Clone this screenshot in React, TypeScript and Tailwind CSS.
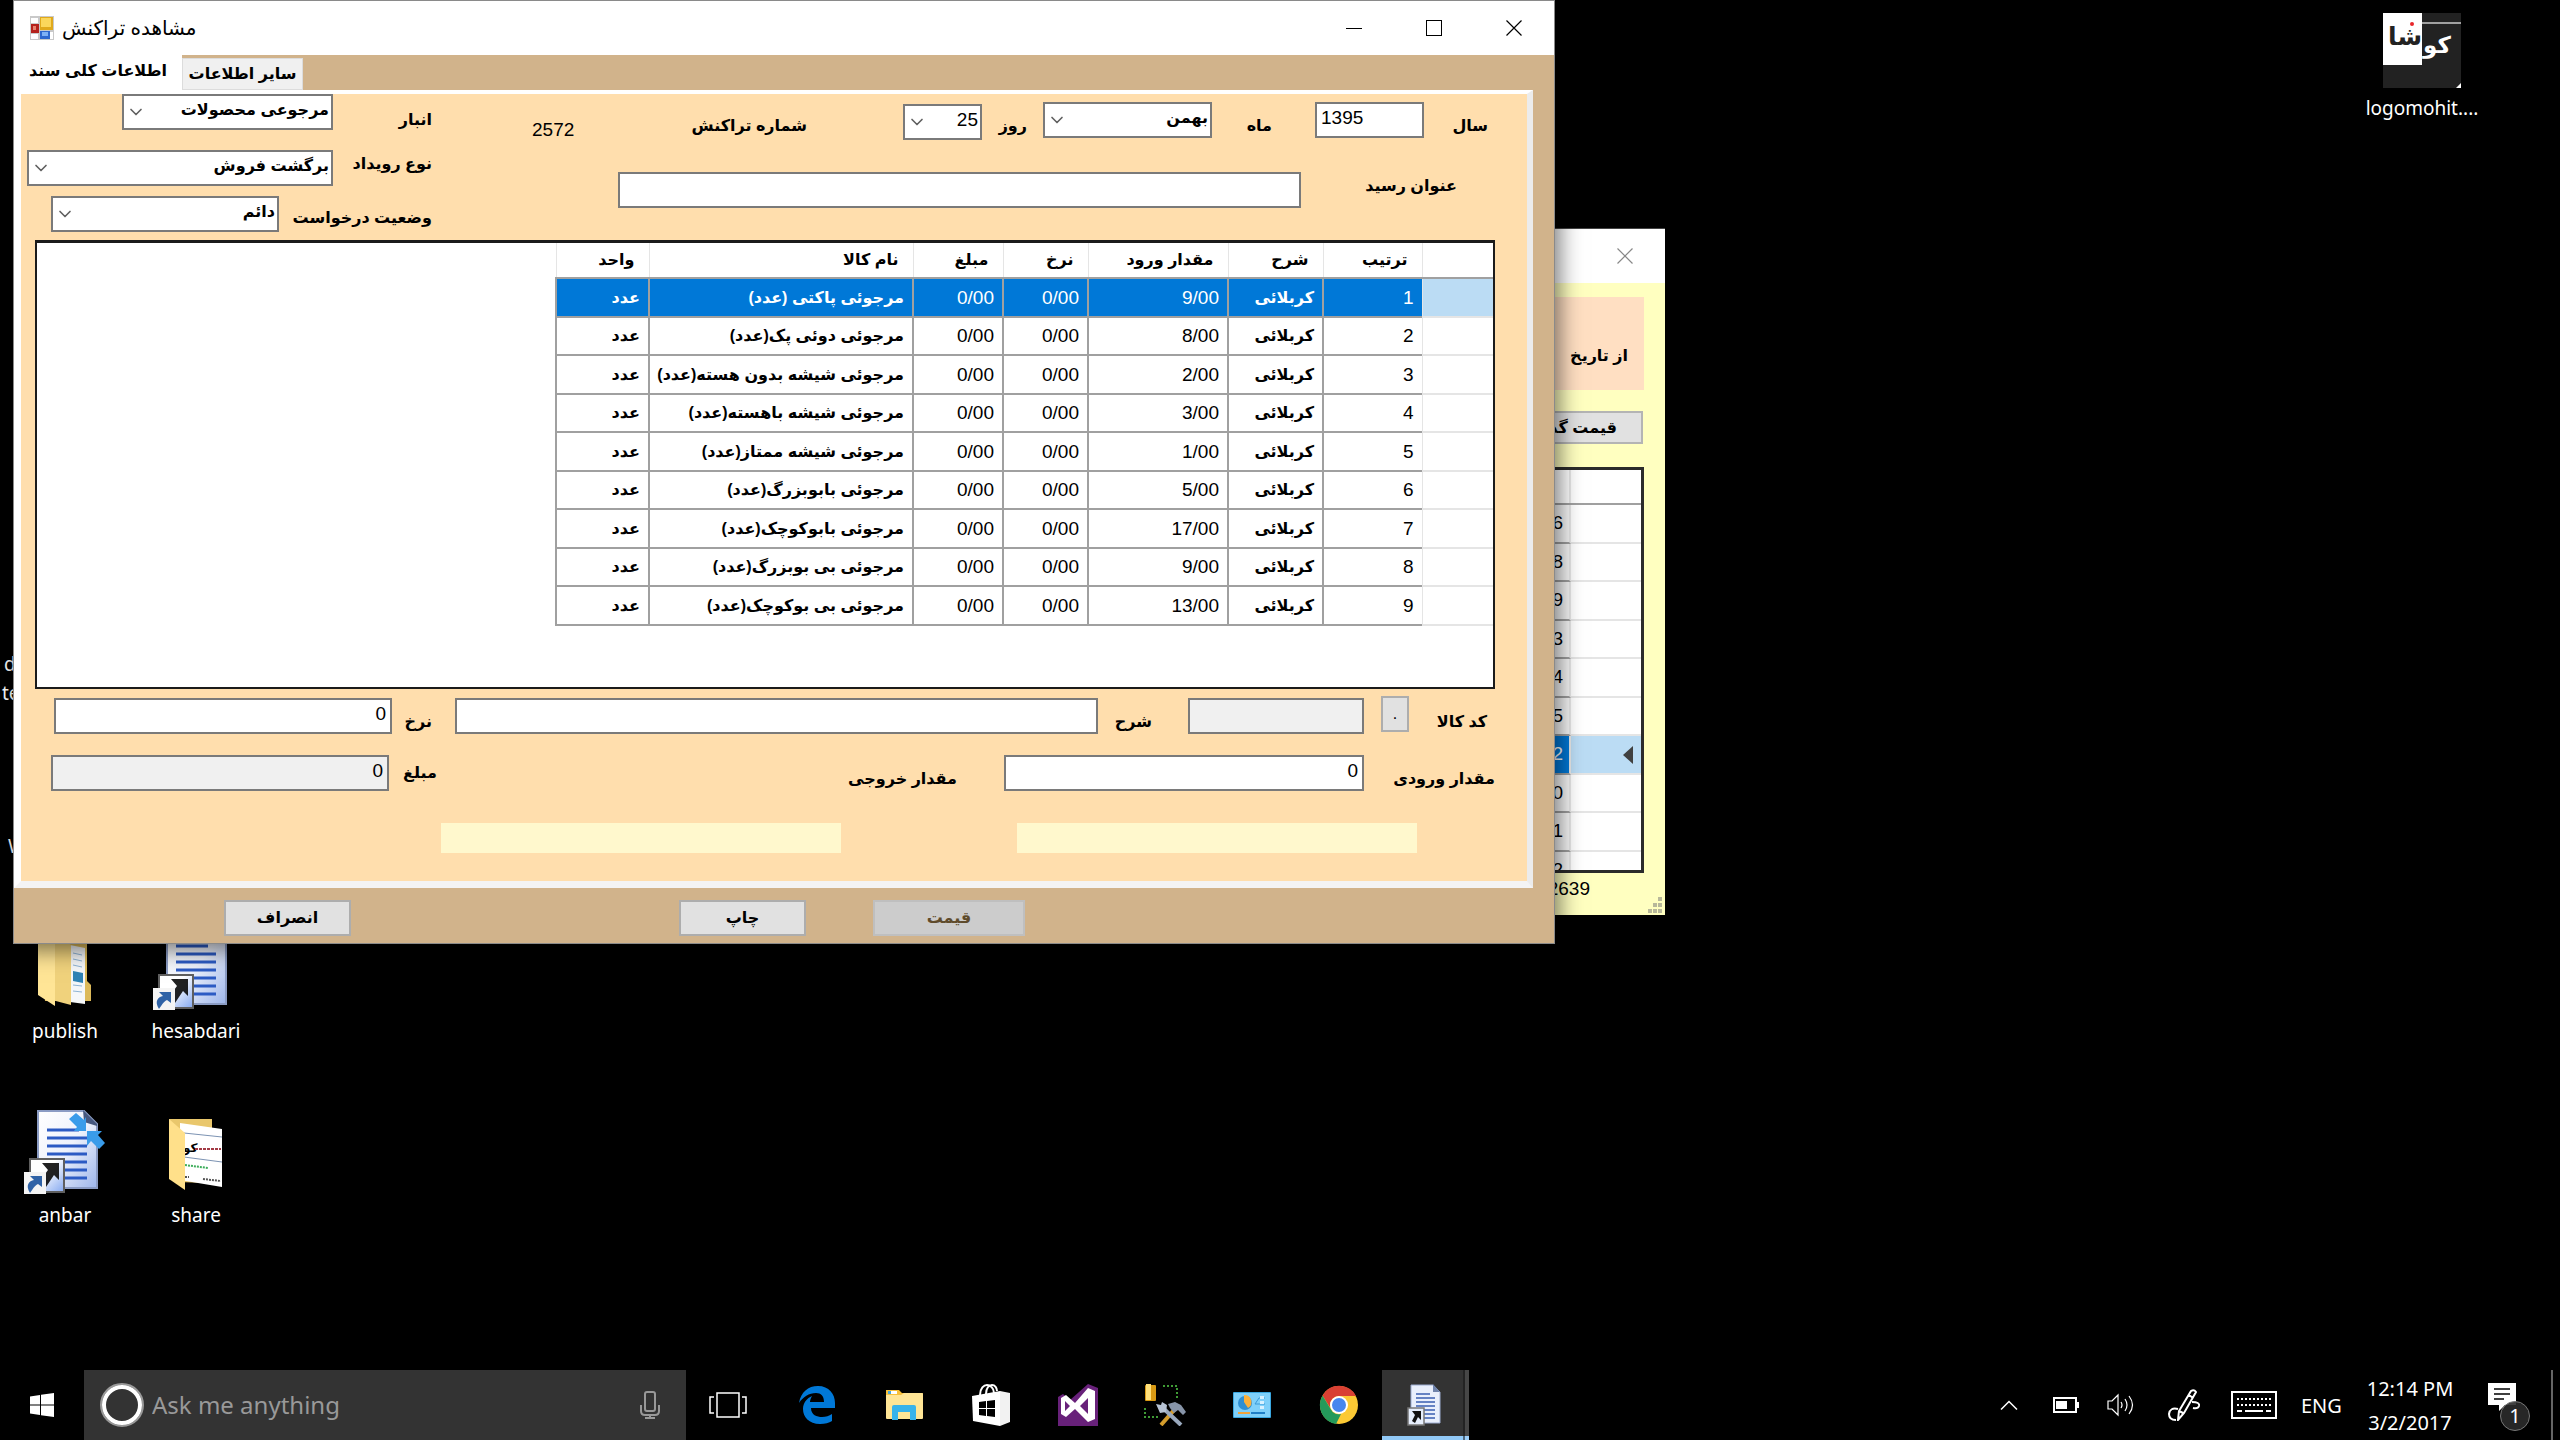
import type { ReactNode } from "react";
import clsx from "clsx";
import { ChevronDown } from "lucide-react";

type Row = {
  order: number;
  qty: string;
  name: string;
};

const ROWS: Row[] = [
  { order: 1, qty: "9/00", name: "مرجوئی پاکتی (عدد)" },
  { order: 2, qty: "8/00", name: "مرجوئی دوئی پک(عدد)" },
  { order: 3, qty: "2/00", name: "مرجوئی شیشه بدون هسته(عدد)" },
  { order: 4, qty: "3/00", name: "مرجوئی شیشه باهسته(عدد)" },
  { order: 5, qty: "1/00", name: "مرجوئی شیشه ممتاز(عدد)" },
  { order: 6, qty: "5/00", name: "مرجوئی بابوبزرگ(عدد)" },
  { order: 7, qty: "17/00", name: "مرجوئی بابوکوچک(عدد)" },
  { order: 8, qty: "9/00", name: "مرجوئی بی بوبزرگ(عدد)" },
  { order: 9, qty: "13/00", name: "مرجوئی بی بوکوچک(عدد)" }
];

const BACK_ROWS = ["6", "8", "9", "3", "4", "5", "2", "0", "1", "2"];
const BACK_SELECTED = 6;

/* ---------- form controls ---------- */

const Label = ({
  htmlFor,
  className,
  children
}: {
  htmlFor?: string;
  className?: string;
  children: ReactNode;
}) => (
  <label
    htmlFor={htmlFor}
    dir="rtl"
    className={clsx("block shrink-0 text-base leading-7 font-bold whitespace-nowrap", className)}
  >
    {children}
  </label>
);

const Combo = ({
  id,
  value,
  numeric = false,
  className
}: {
  id: string;
  value: string;
  numeric?: boolean;
  className?: string;
}) => (
  <div className={clsx("relative h-9 shrink-0", className)}>
    <select
      id={id}
      dir="rtl"
      defaultValue={value}
      className={clsx(
        "h-9 w-full appearance-none border-2 border-[#7a7a7a] bg-white pr-0.5 pb-1 pl-7 outline-none",
        numeric ? "text-[19px]" : "text-base font-bold"
      )}
    >
      <option>{value}</option>
    </select>
    <ChevronDown
      className="pointer-events-none absolute top-2 left-1 h-5 w-5 text-[#606060]"
      strokeWidth={2}
    />
  </div>
);

const TextBox = ({
  id,
  value = "",
  disabled = false,
  className
}: {
  id: string;
  value?: string;
  disabled?: boolean;
  className?: string;
}) => (
  <input
    id={id}
    type="text"
    defaultValue={value}
    disabled={disabled}
    className={clsx(
      "h-9 shrink-0 border-2 border-[#7a7a7a] px-1 pb-1 text-[19px] outline-none",
      disabled ? "bg-[#f0f0f0]" : "bg-white",
      className
    )}
  />
);

const PushButton = ({
  disabled = false,
  className,
  children
}: {
  disabled?: boolean;
  className?: string;
  children: ReactNode;
}) => (
  <button
    type="button"
    disabled={disabled}
    className={clsx(
      "h-9 shrink-0 border-2 text-base font-bold",
      disabled
        ? "border-[#bfbfbf] bg-[#cccccc] text-[#5f4b2b]"
        : "border-[#adadad] bg-[#e1e1e1] text-black",
      className
    )}
  >
    {children}
  </button>
);

/* ---------- window icons ---------- */

const FormIcon = () => (
  <svg viewBox="0 0 24 24" className="h-6 w-6">
    <rect width="24" height="24" fill="#c9c9c9" />
    <rect x="1" y="2" width="7" height="5" fill="#fff" />
    <rect x="1" y="18" width="7" height="5" fill="#fff" />
    <rect x="20" y="16" width="3" height="7" fill="#fff" />
    <rect x="10" y="1" width="13" height="13" fill="#e0a91c" />
    <rect x="11" y="2" width="10" height="9" fill="#fbd75c" />
    <rect x="1" y="8" width="8" height="9" fill="#b5221c" />
    <rect x="3" y="10" width="3" height="4" fill="#e9826f" />
    <rect x="10" y="15" width="10" height="8" fill="#2f67cf" />
    <rect x="12" y="16" width="6" height="4" fill="#7fb0f5" />
  </svg>
);

const CloseGlyph = () => (
  <svg viewBox="0 0 16 16" className="h-4 w-4" stroke="currentColor" strokeWidth="1.2">
    <path d="M.5.5l15 15M15.5.5l-15 15" />
  </svg>
);

/* ---------- desktop icons ---------- */

const DocShortcut = ({ arrows = false }: { arrows?: boolean }) => (
  <svg viewBox="0 0 84 86" className="h-[86px] w-[84px]">
    <defs>
      <linearGradient id="docPage" x1="0" y1="0" x2="1" y2="1">
        <stop offset="0" stopColor="#ffffff" />
        <stop offset=".5" stopColor="#eef2fc" />
        <stop offset="1" stopColor="#9db5ea" />
      </linearGradient>
      <linearGradient id="docBadge" x1="0" y1="0" x2="1" y2="1">
        <stop offset=".4" stopColor="#ffffff" />
        <stop offset="1" stopColor="#84a8f0" />
      </linearGradient>
    </defs>
    <path d="M15 2h46l13 13v64H15z" fill="url(#docPage)" stroke="#8b9cc4" strokeWidth="2" />
    <path d="M60 1l14 14v2l-13-4z" fill="#46587f" />
    <path
      d="M24 21h32M24 29h40M24 37h40M24 45h40M24 53h40M24 61h40M24 69h40"
      stroke="#2c5bc4"
      strokeWidth="3"
    />
    <rect x="7" y="50" width="34" height="33" fill="url(#docBadge)" stroke="#5f5f5f" strokeWidth="2" />
    <path d="M19 54h17v17l-5-5-8 12-6-6 8-11z" fill="#0a0a0a" opacity=".9" />
    <rect x="1" y="63" width="22" height="22" fill="#f4f4f4" />
    <path d="M7 84c-5-8-1-12 4-13l-4-4h12v11l-4-3c-4 2-5 5-8 9z" fill="#2f62a6" />
    {arrows && (
      <path
        d="M46 10l7-6 8 7 2-3v14H51l3-4zM64 22h15l-4 4 7 8-6 6-8-8-4 5z"
        fill="#3a9cea"
      />
    )}
  </svg>
);

const PublishFolder = () => (
  <svg viewBox="0 0 60 88" className="h-[88px] w-[60px]">
    <path d="M4 2h48v56l4 4v16H10z" fill="#dcb959" />
    <path d="M35 22l15 3v56l-15-2z" fill="#f5f7f9" />
    <path d="M38 30l9 2M38 36l9 2M38 42l9 2M38 62l9 1M38 68l9 1" stroke="#8fb4d4" strokeWidth="1" />
    <path d="M38 48l10 2v10l-10-2z" fill="#2f83b5" />
    <path d="M17 8l19 14v60l-19-5z" fill="#f0d27c" />
    <path d="M3 4l17 14v65L3 72z" fill="#ffe596" />
  </svg>
);

const ShareFolder = () => (
  <svg viewBox="0 0 56 77" className="h-[77px] w-14">
    <path d="M1 1h43v64L8 64z" fill="#e9c76c" />
    <path d="M12 5l42 6v58l-42-7z" fill="#ffffff" />
    <path d="M16 15l38 4M16 39l38 5" stroke="#7c93b3" strokeWidth="1" />
    <text x="15" y="34" fontSize="12" fontWeight="bold" className="font-['DejaVu_Sans',sans-serif]">
      کو
    </text>
    <path d="M27 31h26" stroke="#a33a45" strokeWidth="2" strokeDasharray="3 1" />
    <path d="M17 47l23 3" stroke="#3fae5c" strokeWidth="2" strokeDasharray="2 1" />
    <path d="M17 59h4M35 61l18 2" stroke="#555" strokeWidth="2" strokeDasharray="2 1" />
    <path d="M1 1l16 14v57L1 61z" fill="#ffe08a" />
  </svg>
);

const LogoImage = () => (
  <svg viewBox="0 0 78 75" className="h-[75px] w-[78px]">
    <rect width="78" height="75" fill="#222222" />
    <rect width="39" height="52" fill="#ffffff" />
    <rect x="39" y="9" width="39" height="2" fill="#a0a0a0" />
    <path d="M78 70v5h-5z" fill="#fff" />
    <g fontWeight="bold" className="font-['DejaVu_Sans',sans-serif]">
      <text x="5" y="32" fontSize="25" fill="#222222">
        شا
      </text>
      <text x="40" y="40" fontSize="23" fill="#ffffff">
        کو
      </text>
    </g>
    <circle cx="29" cy="11" r="2" fill="#e8262b" />
  </svg>
);

const DesktopIcon = ({
  label,
  className,
  children
}: {
  label: string;
  className: string;
  children?: ReactNode;
}) => (
  <a
    href="#"
    className={clsx(
      "absolute flex w-[130px] flex-col items-center gap-1.5 text-[19px] leading-7 text-white",
      className
    )}
  >
    <span className="flex h-[92px] items-end">{children}</span>
    {label}
  </a>
);

/* ---------- transaction window ---------- */

const ItemsTable = () => (
  <div
    dir="rtl"
    className="mr-8 ml-[14px] h-[449px] border-2 border-t-[3px] border-[#1b1b1b] bg-white"
  >
    <table className="w-[937px] table-fixed border-collapse text-right text-[19px] leading-6">
      <colgroup>
        <col className="w-[71px]" />
        <col className="w-[99px]" />
        <col className="w-[95px]" />
        <col className="w-[140px]" />
        <col className="w-[85px]" />
        <col className="w-[90px]" />
        <col className="w-[264px]" />
        <col className="w-[93px]" />
      </colgroup>
      <thead>
        <tr className="h-[35px] border-b-2 border-[#a0a0a0] text-base">
          <th />
          {["ترتیب", "شرح", "مقدار ورود", "نرخ", "مبلغ", "نام کالا", "واحد"].map((title) => (
            <th key={title} className="border-x border-[#e5e5e5] pr-[14px] whitespace-nowrap">
              {title}
            </th>
          ))}
        </tr>
      </thead>
      <tbody>
        {ROWS.map((row, index) => {
          const cell = clsx(
            "border-l-2 border-b-2 border-[#a0a0a0] pr-2 whitespace-nowrap",
            index === 0 && "bg-[#0078d7] text-white"
          );
          return (
            <tr key={row.order} className="odd:h-[39px] even:h-[38px]">
              <td
                className={clsx(
                  "border-b-2 border-l border-[#e5e5e5]",
                  index === 0 && "bg-[#bbdcf4]"
                )}
              />
              <td className={cell}>{row.order}</td>
              <td className={clsx(cell, "text-base font-bold")}>کربلائی</td>
              <td className={cell}>{row.qty}</td>
              <td className={cell}>0/00</td>
              <td className={cell}>0/00</td>
              <td className={clsx(cell, "text-base font-bold")}>{row.name}</td>
              <td className={clsx(cell, "text-base font-bold")}>عدد</td>
            </tr>
          );
        })}
      </tbody>
    </table>
  </div>
);

const TransactionWindow = () => (
  <section className="absolute top-0 left-[13px] flex w-[1542px] flex-col border border-[#8a8a8a] bg-[#d1b38b] font-['Liberation_Sans','DejaVu_Sans',sans-serif] text-black shadow-[4px_6px_22px_rgba(0,0,0,0.55)]">
    <header className="flex h-[54px] items-center bg-white pl-4">
      <FormIcon />
      <h1 className="ml-2 font-['Noto_Sans','DejaVu_Sans',sans-serif] text-xl">مشاهده تراکنش</h1>
      <div className="ml-auto flex">
        <button type="button" aria-label="Minimize" className="grid h-[52px] w-20 place-items-center">
          <span className="h-px w-4 bg-black" />
        </button>
        <button type="button" aria-label="Maximize" className="grid h-[52px] w-20 place-items-center">
          <span className="h-4 w-4 border border-black" />
        </button>
        <button type="button" aria-label="Close" className="grid h-[52px] w-20 place-items-center">
          <CloseGlyph />
        </button>
      </div>
    </header>

    <nav className="flex h-[35px] items-end text-base font-bold">
      <button type="button" className="h-[35px] w-[168px] bg-white pb-1 whitespace-nowrap">
        اطلاعات کلی سند
      </button>
      <button
        type="button"
        className="h-8 w-[121px] border border-[#dcdcdc] bg-[#f0f0f0] whitespace-nowrap"
      >
        سایر اطلاعات
      </button>
    </nav>

    <form className="mr-[21px] h-[798px] border-t-4 border-r-[6px] border-b-[7px] border-l-[7px] border-t-white border-r-[#ececec] border-b-[#f4f4f4] border-l-white bg-[#ffdead]">
      <div className="flex h-[146px]">
        <div className="ml-[5px] w-[406px]">
          <div dir="rtl" className="flex">
            <Label htmlFor="store" className="w-[99px] pt-3">انبار</Label>
            <Combo id="store" value="مرجوعی محصولات" className="w-[211px]" />
          </div>
          <div dir="rtl" className="mt-4 flex">
            <Label htmlFor="event" className="w-[99px]">نوع رویداد</Label>
            <Combo id="event" value="برگشت فروش" className="w-[306px]" />
          </div>
          <div dir="rtl" className="mt-2.5 flex">
            <Label htmlFor="status" className="w-[153px] pt-2">وضعیت درخواست</Label>
            <Combo id="status" value="دائم" className="w-[228px]" />
          </div>
        </div>

        <div className="ml-[100px] w-[958px]">
          <div className="flex h-[46px] pt-2">
            <output id="number" className="w-[42px] pt-3.5 text-[19px] leading-7">2572</output>
            <Label htmlFor="number" className="w-[233px] pt-2.5">شماره تراکنش</Label>
            <Combo id="day" value="25" numeric className="mt-0.5 ml-24 w-[79px]" />
            <Label htmlFor="day" className="w-[45px] pt-2.5">روز</Label>
            <Combo id="month" value="بهمن" className="ml-4 w-[169px]" />
            <Label htmlFor="month" className="w-[60px] pt-2.5">ماه</Label>
            <TextBox id="year" value="1395" className="ml-[43px] w-[109px]" />
            <Label htmlFor="year" className="w-16 pt-2.5">سال</Label>
          </div>
          <div className="mt-8 flex">
            <TextBox id="title" className="ml-[86px] w-[683px]" />
            <Label htmlFor="title" className="w-[156px]">عنوان رسید</Label>
          </div>
        </div>
      </div>

      <ItemsTable />

      <div className="mt-[7px] flex">
        <TextBox id="rate" value="0" className="mt-0.5 ml-[33px] w-[338px] text-right" />
        <Label htmlFor="rate" className="w-10 pt-3">نرخ</Label>
        <TextBox id="desc" className="mt-0.5 ml-[23px] w-[643px]" />
        <Label htmlFor="desc" className="w-[54px] pt-3">شرح</Label>
        <TextBox id="code" disabled className="mt-0.5 ml-9 w-[176px]" />
        <PushButton className="ml-[17px] w-7 font-normal">.</PushButton>
        <Label htmlFor="code" className="w-[78px] pt-3">کد کالا</Label>
      </div>

      <div className="mt-[19px] flex">
        <TextBox id="amount" value="0" disabled className="ml-[30px] w-[338px] text-right" />
        <Label htmlFor="amount" className="w-12 pt-1">مبلغ</Label>
        <Label className="w-[520px] pt-2.5">مقدار خروجی</Label>
        <TextBox id="qtyIn" value="0" className="ml-[47px] w-[360px] text-right" />
        <Label htmlFor="qtyIn" className="w-[131px] pt-2.5">مقدار ورودی</Label>
      </div>

      <div className="mt-[30px] flex">
        <div className="ml-[420px] h-[30px] w-[400px] bg-[#fff8cd]" />
        <div className="ml-[176px] h-[30px] w-[400px] bg-[#fff8cd]" />
      </div>
    </form>

    <footer className="flex h-[55px] pt-3">
      <PushButton className="ml-[210px] w-[127px]">انصراف</PushButton>
      <PushButton className="ml-[328px] w-[127px]">چاپ</PushButton>
      <PushButton disabled className="ml-[67px] w-[152px]">قیمت</PushButton>
    </footer>
  </section>
);

/* ---------- list window, mostly behind the first one ---------- */

const ListWindow = () => (
  <section className="absolute top-[228px] left-[1400px] flex h-[687px] w-[265px] flex-col border-t border-[#444] bg-[#ffffc0] font-['Liberation_Sans','DejaVu_Sans',sans-serif] text-black">
    <header className="flex h-[54px] shrink-0 items-center justify-end bg-white pr-8">
      <button type="button" aria-label="Close" className="text-[#888]">
        <CloseGlyph />
      </button>
    </header>
    <div className="mt-3.5 mr-[21px] flex h-[93px] shrink-0 flex-col justify-end bg-[#ffdfc2] pr-4 pb-5">
      <p dir="rtl" className="text-base leading-7 font-bold">از تاریخ</p>
    </div>
    <button
      type="button"
      dir="rtl"
      className="mt-[21px] mr-[22px] h-[33px] shrink-0 border-2 border-[#b4b4b4] bg-[#e1e1e1] pr-6 text-right text-base font-bold"
    >
      قیمت گذاری
    </button>
    <div className="mt-[23px] mr-[21px] h-[406px] shrink-0 overflow-hidden border-3 border-[#2b2b2b] bg-white">
      <div className="flex h-[35px] border-b-2 border-[#a0a0a0]">
        <div className="h-full flex-1 border-r-2 border-[#e8e8e8]" />
        <div className="w-[70px]" />
      </div>
      {BACK_ROWS.map((digit, index) => (
        <div key={index} className="flex text-[19px] odd:h-[38px] even:h-[39px]">
          <div
            className={clsx(
              "flex flex-1 items-center justify-end border-r-2 border-b-2 border-r-[#e8e8e8] border-b-[#a0a0a0] pr-1.5",
              index === BACK_SELECTED ? "bg-[#0078d7] text-white" : "bg-[#f8f8f8]"
            )}
          >
            {digit}
          </div>
          <div
            className={clsx(
              "flex w-[70px] items-center justify-end border-b-2 border-[#e5e5e5] pr-2",
              index === BACK_SELECTED && "bg-[#bbdcf4]"
            )}
          >
            {index === BACK_SELECTED && (
              <svg viewBox="0 0 10 18" className="h-[18px] w-2.5">
                <path d="M10 0v18L0 9z" fill="#404040" />
              </svg>
            )}
          </div>
        </div>
      ))}
    </div>
    <div className="flex flex-1 items-start justify-between pt-1 pr-[3px]">
      <span className="w-[190px] text-right text-[19px] leading-6">2639</span>
      <svg viewBox="0 0 14 16" className="mt-5 h-4 w-3.5" fill="#b8b89a">
        <path d="M10 0h4v4h-4zM10 6h4v4h-4zM10 12h4v4h-4zM5 6h4v4H5zM5 12h4v4H5zM0 12h4v4H0z" />
      </svg>
    </div>
  </section>
);

/* ---------- taskbar ---------- */

const TaskButton = ({
  label,
  active = false,
  children
}: {
  label: string;
  active?: boolean;
  children: ReactNode;
}) => (
  <button
    type="button"
    aria-label={label}
    className={clsx(
      "grid h-full w-[87px] shrink-0 place-items-center",
      active && "border-b-4 border-[#91c9f7] bg-[#333333] pt-1"
    )}
  >
    {children}
  </button>
);

const TaskViewIcon = () => (
  <svg viewBox="0 0 38 26" className="h-[26px] w-[38px]" fill="none" stroke="#fff" strokeWidth="1.5">
    <path d="M8 1h22v24H8zM5 5H1v16h4M33 5h4v16h-4" />
  </svg>
);

const EdgeIcon = () => (
  <svg viewBox="0 0 36 38" className="h-[38px] w-9">
    <path
      d="M0 17C2 6 9 0 19 0c11 0 17 8 17 17v5H12c0 7 6 9 11 9 4 0 7-1 10-3v7c-3 2-7 3-12 3C10 38 4 31 4 23c0-6 4-11 9-13-1 2-2 4-2 6h14c0-6-3-9-8-9C10 7 4 11 0 17z"
      fill="#0078d7"
    />
  </svg>
);

const ExplorerIcon = () => (
  <svg viewBox="0 0 38 32" className="h-8 w-[38px]">
    <path d="M1 1h13l3 3h20a1 1 0 011 1v6H1z" fill="#f7c03a" />
    <path d="M1 6h15l3-2h18a1 1 0 011 1v24a1 1 0 01-1 1H2a1 1 0 01-1-1z" fill="#ffe595" />
    <rect x="3" y="2" width="9" height="3" fill="#fff" />
    <rect x="3" y="2" width="3" height="3" fill="#46a6dc" />
    <path d="M7 31V18q0-2 2-2h20q2 0 2 2v13h-6v-8H13v8z" fill="#38b3ea" />
  </svg>
);

const StoreIcon = () => (
  <svg viewBox="0 0 38 42" className="h-[42px] w-[38px]">
    <path
      d="M8 11C8 4 12 1 15 1s7 3 7 8M14 10c0-6 3-9 6-9s5 3 5 6"
      fill="none"
      stroke="#fff"
      strokeWidth="2"
    />
    <path d="M0 12l28-5v35L1 37z" fill="#fff" />
    <path d="M28 7l10 2v29l-10 4z" fill="#f2f2f2" />
    <path d="M7 18l7-1v7H7zM15 17l8-1v8h-8zM7 25h7v7l-7-1zM15 25h8v8l-8-1z" fill="#000" />
  </svg>
);

const VisualStudioIcon = () => (
  <svg viewBox="0 0 40 42" className="h-[42px] w-10">
    <path d="M30 0l10 4v38H0V13l5-3 7 6z" fill="#68217a" />
    <path
      d="M30 4l7 3v28l-7 3-13-13-9 8-5-3V14l5-3 9 8zM30 14l-8 8 8 8zM7 17v10l5-5z"
      fill="#fff"
      fillRule="evenodd"
    />
  </svg>
);

const ToolsIcon = () => (
  <svg viewBox="0 0 42 42" className="h-[42px] w-[42px]">
    <rect x="1" y="1" width="11" height="16" rx="1" fill="#d99a14" />
    <rect x="2" y="0" width="5" height="16" fill="#ffe07a" />
    <path d="M19 2h14v14M1 24v9h14" fill="none" stroke="#3f9b35" strokeWidth="2" strokeDasharray="2 2" />
    <path d="M17 41l14-16" stroke="#d59d2c" strokeWidth="4" />
    <path d="M19 24l18 17" stroke="#9aa9be" strokeWidth="4" />
    <path d="M12 20l5 1 1-3 5 3-1 7-6 1z" fill="#b7c3d4" />
    <path d="M24 20l7-2 6 3 5 7-3 3-5-5-4 3-4-5z" fill="#8794a8" />
  </svg>
);

const PanelIcon = () => (
  <svg viewBox="0 0 38 26" className="h-[26px] w-[38px]">
    <rect width="38" height="26" rx="1" fill="#3aa7e0" />
    <rect x="1" y="1" width="36" height="24" fill="#7fd0fa" />
    <circle cx="12" cy="11" r="7" fill="#2f8fd3" />
    <path d="M11 10V3a7 7 0 014 13z" fill="#fbb03b" />
    <path d="M22 12l4-6h6M22 12h10" fill="none" stroke="#3b9ad8" strokeWidth="1" />
    <path d="M27 4h4v3h-4zM27 9h4v3h-4zM27 14h4v3h-4z" fill="#d8f1ff" />
    <path d="M5 21h12" stroke="#f2a33a" strokeWidth="2" />
    <path d="M18 21h14" stroke="#1f7fc8" strokeWidth="2" />
  </svg>
);

const ChromeIcon = () => (
  <svg viewBox="0 0 40 40" className="h-10 w-10">
    <circle cx="20" cy="20" r="19" fill="#fcc934" />
    <path d="M3.5 10.5A19 19 0 0137 11H20a9 9 0 00-8 13z" fill="#d94033" />
    <path d="M3.5 10.5L12 24.5a9 9 0 0010 4.5l-5 10A19 19 0 013.5 10.5z" fill="#249a5a" />
    <circle cx="20" cy="20" r="9" fill="#fff" />
    <circle cx="20" cy="20" r="7" fill="#4886ee" />
  </svg>
);

const DocTaskIcon = () => (
  <svg viewBox="0 0 34 42" className="h-[42px] w-[34px]">
    <path d="M4 1h22l7 7v31H4z" fill="#e9effc" stroke="#9cacd0" strokeWidth="1" />
    <path d="M26 0l7 8h-7z" fill="#6f83ab" />
    <path
      d="M9 10h14M9 14h19M9 18h19M9 22h19M9 26h19M17 30h11M17 34h11"
      stroke="#3a5fb0"
      strokeWidth="1.5"
    />
    <rect x="1" y="24" width="16" height="17" fill="#e6eefc" stroke="#777" strokeWidth="1.5" />
    <path d="M5 27h9v9l-3-3-3 6-3-2 3-6z" fill="#111" />
  </svg>
);

const Taskbar = () => (
  <footer className="flex h-[70px] w-full shrink-0 items-center bg-black text-white">
    <button type="button" aria-label="Start" className="grid h-full w-[84px] shrink-0 place-items-center">
      <svg viewBox="0 0 24 24" className="h-6 w-6" fill="#fff">
        <path d="M0 3.5l10-1.5v9.5H0zM11 1.8L24 0v11.5H11zM0 12.5h10V22L0 20.5zM11 12.5h13V24l-13-1.8z" />
      </svg>
    </button>
    <div className="flex h-full w-[602px] items-center bg-[#333333] pl-4">
      <span className="h-11 w-11 shrink-0 rounded-full border-2 border-[#999]">
        <span className="block h-10 w-10 rounded-full border-4 border-white" />
      </span>
      <input
        type="text"
        aria-label="Search"
        placeholder="Ask me anything"
        className="ml-2 min-w-0 flex-1 bg-transparent text-2xl outline-none placeholder:text-[#999999]"
      />
      <svg viewBox="0 0 22 28" className="mr-[25px] h-7 w-[22px]" fill="none" stroke="#999" strokeWidth="2">
        <rect x="6" y="1" width="10" height="19" rx="2" />
        <path d="M2 14v6q0 4 4 4h10q4 0 4-4v-6M11 24v3M6 27h10" />
      </svg>
    </div>
    <TaskButton label="Task view">
      <span className="mr-1"><TaskViewIcon /></span>
    </TaskButton>
    <TaskButton label="Edge"><EdgeIcon /></TaskButton>
    <TaskButton label="File Explorer"><ExplorerIcon /></TaskButton>
    <TaskButton label="Store"><StoreIcon /></TaskButton>
    <TaskButton label="Visual Studio"><VisualStudioIcon /></TaskButton>
    <TaskButton label="Database tools"><ToolsIcon /></TaskButton>
    <TaskButton label="Control panel"><PanelIcon /></TaskButton>
    <TaskButton label="Chrome"><ChromeIcon /></TaskButton>
    <div className="relative h-full shrink-0">
      <TaskButton label="Anbar" active>
        <span className="mr-1"><DocTaskIcon /></span>
      </TaskButton>
      <span className="absolute inset-y-0 right-0 w-1.5 border-l-2 border-black/50 bg-white/10" />
    </div>

    <div className="ml-auto flex h-full shrink-0 items-center">
      <svg viewBox="0 0 18 10" className="mr-[35px] h-2.5 w-[18px]" fill="none" stroke="#fff" strokeWidth="1.5">
        <path d="M1 9.5l8-8 8 8" />
      </svg>
      <svg viewBox="0 0 26 16" className="mr-7 h-4 w-[26px]" fill="none" stroke="#fff" strokeWidth="2">
        <rect x="1" y="1" width="22" height="14" />
        <path d="M25 5v6" />
        <rect x="3" y="4" width="11" height="8" fill="#fff" stroke="none" />
      </svg>
      <svg viewBox="0 0 27 24" className="mr-[34px] h-6 w-[27px]" fill="none" stroke="#fff" strokeWidth="1.2">
        <path d="M1 8h4l6-6v20l-6-6H1zM14 9q2 3 0 6M18 6q4 6 0 12M22 3q7 9 0 18" />
      </svg>
      <svg viewBox="0 0 32 32" className="mr-[31px] h-8 w-8" fill="none" stroke="#fff" strokeWidth="2">
        <path d="M10 31l1-9L23 2q3-2 5 1L16 24zM11 22l4 2M21 6l4 3M10 20q-8-2-9 5 0 6 7 6M24 13q8 0 7 4-1 3-6 2" />
      </svg>
      <svg viewBox="0 0 46 28" className="mr-6 h-7 w-[46px]" fill="none" stroke="#fff" strokeWidth="2">
        <rect x="1" y="1" width="44" height="26" />
        <path d="M6 8h34M6 14h34" strokeDasharray="2 2" />
        <path d="M6 20h5M14 20h18M35 20h5" />
      </svg>
      <span className="mr-[25px] w-10 pt-0.5 text-xl">ENG</span>
      <div className="mr-[34px] flex w-[88px] flex-col items-center pt-0.5 text-xl leading-[34px] whitespace-nowrap">
        <span>12:14 PM</span>
        <span>3/2/2017</span>
      </div>
      <div className="relative mr-[21px] h-11 w-[42px]">
        <svg viewBox="0 0 28 28" className="h-7 w-7">
          <path d="M0 0h28v22H17l-6 6v-6H0z" fill="#fff" />
          <path d="M6 6h16M6 11h16M6 16h10" stroke="#000" strokeWidth="1.5" />
        </svg>
        <span className="absolute right-0 -bottom-1 grid h-[30px] w-[30px] place-items-center rounded-full border border-[#777] bg-[#2b2b2b]/90 text-xl leading-none">
          1
        </span>
      </div>
      <span className="mr-[7px] h-full w-0.5 bg-[#666]" />
    </div>
  </footer>
);

export default function App() {
  return (
    <div className="flex min-h-screen w-full flex-col overflow-hidden bg-black font-['Noto_Sans',sans-serif]">
      <main className="relative flex-1">
        <p className="absolute top-[650px] left-1 text-[19px] leading-7 text-white">d</p>
        <p className="absolute top-[679px] left-0.5 text-[19px] leading-7 text-white">te</p>
        <p className="absolute top-[832px] left-2 text-[19px] leading-7 text-white">W</p>
        <DesktopIcon label="publish" className="top-[919px] left-0">
          <PublishFolder />
        </DesktopIcon>
        <DesktopIcon label="hesabdari" className="top-[919px] left-[131px]">
          <span className="mr-1"><DocShortcut /></span>
        </DesktopIcon>
        <DesktopIcon label="anbar" className="top-[1103px] left-0">
          <DocShortcut arrows />
        </DesktopIcon>
        <DesktopIcon label="share" className="top-[1103px] left-[131px]">
          <ShareFolder />
        </DesktopIcon>
        <DesktopIcon label="logomohit...." className="-top-1 right-[73px]">
          <LogoImage />
        </DesktopIcon>
        <ListWindow />
        <TransactionWindow />
      </main>
      <Taskbar />
    </div>
  );
}
